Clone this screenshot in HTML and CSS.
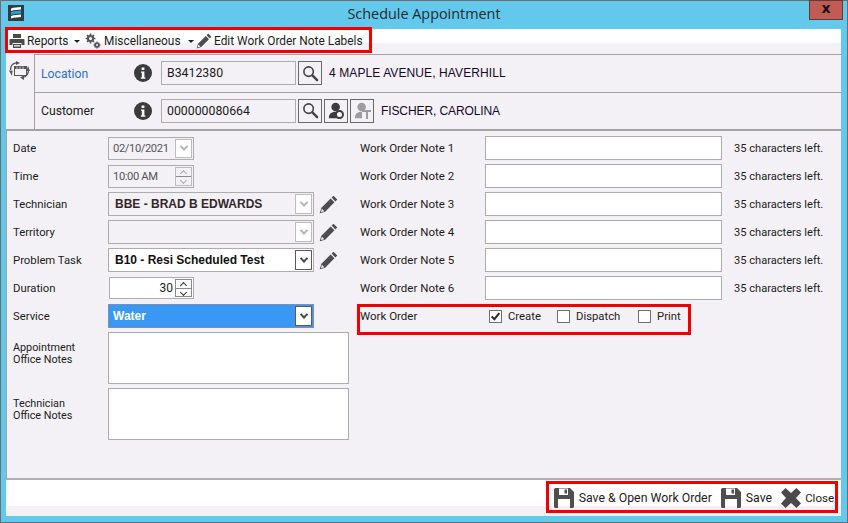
FILE: index.html
```html
<!DOCTYPE html>
<html lang="en">
<head>
<meta charset="utf-8">
<title>Schedule Appointment</title>
<link rel="stylesheet" href="styles.css">
</head>
<body>
<svg class="defs" width="0" height="0" aria-hidden="true">
  <symbol id="i-print" viewBox="0 0 16 16"><path fill="#4a4a4a" d="M4 1h8v4H4zM1.500 6h13a1 1 0 0 1 1 1v5h-3v-2h-9v2H.5V7a1 1 0 0 1 1-1zM4 11h8v4H4z"/><path fill="#fff" d="M5 12h6v.8H5zM5 13.500h6v.6H5z"/></symbol>
  <symbol id="i-gears" viewBox="0 0 16 16"><g fill="none" stroke="#555"><circle cx="5.500" cy="5.500" r="2.600" stroke-width="2"/><path stroke-width="1.600" d="M5.500.6v2M5.500 8.400v2M.6 5.500h2M8.400 5.500h2M2 2l1.400 1.400M7.600 7.600L9 9M2 9l1.400-1.400M7.600 3.400L9 2"/><circle cx="12" cy="12" r="1.800" stroke-width="1.600"/><path stroke-width="1.300" d="M12 8.600v1.400M12 14v1.400M8.600 12H10M14 12h1.400M9.600 9.600l1 1M13.400 13.400l1 1M9.600 14.400l1-1M13.400 10.600l1-1"/></g></symbol>
  <symbol id="i-pencil" viewBox="0 0 16 16"><path fill="#4d4d4d" d="M12.200.6l3.200 3.200-1.600 1.600-3.200-3.200zM9.800 3l3.200 3.200-7.800 7.800L.6 15.400 2 10.800zM2.400 11.500l-.8 2.900 2.900-.8z"/></symbol>
  <symbol id="i-search" viewBox="0 0 18 18"><circle cx="7" cy="7" r="5" fill="none" stroke="#444" stroke-width="1.700"/><path stroke="#444" stroke-width="2.600" stroke-linecap="round" d="M11 11l5 5"/></symbol>
  <symbol id="i-info" viewBox="0 0 18 18"><circle cx="9" cy="9" r="9" fill="#3c3c3c"/><path fill="#fff" d="M7.600 3.400h2.800v2.500H7.600zM7 7.400h3.400v6h1v1.300H6.800v-1.300h1v-4.700H7z"/></symbol>
  <symbol id="i-person" viewBox="0 0 20 20"><circle cx="9" cy="6" r="5"/><path d="M1 19c0-5 3-7.500 8-7.500 1.500 0 3 .2 4 .7V19z"/></symbol>
  <symbol id="i-save" viewBox="0 0 20 20"><path fill="#4f4f4f" fill-rule="evenodd" d="M1.500 0H16l4 4v14.500a1.500 1.500 0 0 1-1.500 1.500h-17A1.500 1.500 0 0 1 0 18.500v-17A1.500 1.500 0 0 1 1.500 0zM5 .5V7h9V.5zM4 11v9h12v-9z"/><path fill="#4f4f4f" d="M10.500 1.500H13v4h-2.500z"/></symbol>
  <symbol id="i-close" viewBox="0 0 20 20"><path fill="#4a4a4a" d="M4.500 0L10 5l5.500-5L20 4.500 15 10l5 5.500-4.500 4.500L10 15l-5.500 5L0 15.500 5 10 0 4.500z"/></symbol>
  <symbol id="i-logo" viewBox="0 0 16 16"><rect width="16" height="16" fill="#333b42"/><path fill="#fff" d="M3 3.500c3-1.500 7-1 10-1.500v2.500c-3 .5-7 0-10 1.500z"/><path fill="#1e9fd8" d="M3 7c3-1.500 7-1 10-1.500v3c-3 .5-7 0-10 1.500z"/><path fill="#fff" d="M3 11c3-1.500 7-1 10-1.500v2.500c-3 .5-7 0-10 1.500z"/></symbol>
  <symbol id="i-sync" viewBox="0 0 21 19"><path fill="none" stroke="#555" stroke-width="1.200" d="M1.500 9C1.500 4 4 2 8 1.800M19.500 9c0 4-2 6.500-5.500 7.500"/><path fill="#555" d="M7 0l4 2-4 2zM0 9.500h3.500L3 15zM15 14.500l-4 2 4 2.500zM17.500 10h3.500L19 5z"/><rect x="5.500" y="5.500" width="12" height="9" fill="#f3f1f5" stroke="#555"/><path fill="#555" d="M5.500 5.500h12V8h-12z"/><path stroke="#f3f1f5" stroke-width=".8" d="M8 5.500V8M11 5.500V8M14 5.500V8"/></symbol>
</svg>

<main class="window">
  <header class="titlebar">
    <svg class="app-logo"><use href="#i-logo"/></svg>
    <h1 class="title">Schedule Appointment</h1>
    <button class="close-btn" type="button"><span class="close-x">x</span></button>
  </header>

  <div class="content">
    <nav class="toolbar">
      <span class="tool t-rep"><svg class="ic16"><use href="#i-print"/></svg>Reports<i class="caret"></i></span>
      <span class="tool t-misc"><svg class="ic16 gear"><use href="#i-gears"/></svg>Miscellaneous<i class="caret"></i></span>
      <span class="tool"><svg class="ic16"><use href="#i-pencil"/></svg>Edit Work Order Note Labels</span>
    </nav>

    <section class="head">
      <div class="head-side"><svg class="sync"><use href="#i-sync"/></svg></div>
      <div class="head-rows">
        <div class="head-row">
          <a class="head-label link">Location</a>
          <svg class="info"><use href="#i-info"/></svg>
          <span class="field id-field">B3412380</span>
          <span class="sq-btn"><svg class="ic18"><use href="#i-search"/></svg></span>
          <span class="addr wide">4 MAPLE AVENUE, HAVERHILL</span>
        </div>
        <div class="head-row">
          <span class="head-label">Customer</span>
          <svg class="info"><use href="#i-info"/></svg>
          <span class="field id-field">000000080664</span>
          <span class="sq-btn"><svg class="ic18"><use href="#i-search"/></svg></span>
          <span class="sq-btn"><svg class="ic18 person-dark"><use href="#i-person"/></svg><i class="badge-round"></i></span>
          <span class="sq-btn"><svg class="ic18 person-light"><use href="#i-person"/></svg><i class="badge-t"></i></span>
          <span class="addr">FISCHER, CAROLINA</span>
        </div>
      </div>
    </section>

    <section class="form">
      <div class="col-left">
        <div class="row"><span class="lbl">Date</span>
          <span class="field dim w-date">02/10/2021<span class="drop drop-dis"><i class="chev"></i></span></span></div>
        <div class="row"><span class="lbl">Time</span>
          <span class="field dim w-date">10:00 AM<span class="spin spin-dis"><i class="up"></i><i class="down"></i></span></span></div>
        <div class="row"><span class="lbl">Technician</span>
          <span class="field w-combo disabled strong">BBE - BRAD B EDWARDS<span class="drop drop-dis"><i class="chev"></i></span></span>
          <svg class="edit"><use href="#i-pencil"/></svg></div>
        <div class="row"><span class="lbl">Territory</span>
          <span class="field w-combo disabled"><span class="drop drop-dis"><i class="chev"></i></span></span>
          <svg class="edit"><use href="#i-pencil"/></svg></div>
        <div class="row"><span class="lbl">Problem Task</span>
          <span class="field w-combo white strong dark">B10 - Resi Scheduled Test<span class="drop"><i class="chev"></i></span></span>
          <svg class="edit"><use href="#i-pencil"/></svg></div>
        <div class="row"><span class="lbl">Duration</span>
          <span class="field w-num white">30<span class="spin"><i class="up"></i><i class="down"></i></span></span></div>
        <div class="row"><span class="lbl">Service</span>
          <span class="field w-combo selected">Water<span class="drop"><i class="chev"></i></span></span></div>
        <div class="note-row"><span class="lbl two">Appointment<br>Office Notes</span><div class="area"></div></div>
        <div class="note-row"><span class="lbl two">Technician<br>Office Notes</span><div class="area"></div></div>
      </div>

      <div class="col-right">
        <div class="wo-row"><span class="wo-lbl">Work Order Note 1</span><span class="wo-input"></span><span class="left-txt">35 characters left.</span></div>
        <div class="wo-row"><span class="wo-lbl">Work Order Note 2</span><span class="wo-input"></span><span class="left-txt">35 characters left.</span></div>
        <div class="wo-row"><span class="wo-lbl">Work Order Note 3</span><span class="wo-input"></span><span class="left-txt">35 characters left.</span></div>
        <div class="wo-row"><span class="wo-lbl">Work Order Note 4</span><span class="wo-input"></span><span class="left-txt">35 characters left.</span></div>
        <div class="wo-row"><span class="wo-lbl">Work Order Note 5</span><span class="wo-input"></span><span class="left-txt">35 characters left.</span></div>
        <div class="wo-row"><span class="wo-lbl">Work Order Note 6</span><span class="wo-input"></span><span class="left-txt">35 characters left.</span></div>
        <div class="wo-row checks">
          <span class="wo-lbl">Work Order</span>
          <span class="check c1"><i class="box"><svg viewBox="0 0 13 13"><path fill="none" stroke="#2e2e2e" stroke-width="2.400" d="M2 6.500l3.200 3.200L11 2.500"/></svg></i>Create</span>
          <span class="check c2"><i class="box"></i>Dispatch</span>
          <span class="check"><i class="box"></i>Print</span>
        </div>
      </div>
    </section>

    <footer class="footer">
      <span class="fbtn"><svg class="ic20"><use href="#i-save"/></svg>Save &amp; Open Work Order</span>
      <span class="fbtn"><svg class="ic20"><use href="#i-save"/></svg>Save</span>
      <span class="fbtn"><svg class="ic20 x"><use href="#i-close"/></svg><span class="close-txt">Close</span></span>
    </footer>
  </div>

  <div class="mark mark-top"></div>
  <div class="mark mark-mid"></div>
  <div class="mark mark-bot"></div>
</main>
</body>
</html>
```

FILE: styles.css
```css
* { box-sizing: border-box; }
html, body { margin: 0; padding: 0; }
body { width: 848px; height: 523px; overflow: hidden; font-family: Roboto, "Open Sans", sans-serif; font-size: 12px; color: #1c1c1c; }
.defs { position: absolute; }
.window { position: relative; width: 848px; height: 523px; background: #62c8ec; border: 1px solid #6e6e6e; display: flex; flex-direction: column; }

.titlebar { height: 28px; display: flex; align-items: center; justify-content: center; position: relative; flex: none; }
.app-logo { position: absolute; left: 7px; top: 4px; width: 16px; height: 16px; }
.title { margin: 0 0 4px; font-family: "Open Sans", sans-serif; font-weight: 400; font-size: 14.400px; color: #1f2a30; }
.close-btn { position: absolute; right: 4px; top: -1px; width: 34px; height: 20px; background: #c25b53; border: 1px solid #5e3a38; padding: 0; display: flex; align-items: center; justify-content: center; }
.close-x { font-family: "DejaVu Sans", sans-serif; font-weight: 700; font-size: 14px; line-height: 12px; color: #111; position: relative; top: -2px; }

.content { margin: 0 6px 6px 5px; flex: 1; display: flex; flex-direction: column; background: #f3f1f5; min-height: 0; }

.toolbar { height: 25px; flex: none; display: flex; align-items: center; padding: 0 0 1px 3px; background: linear-gradient(#fff 0 14px, #f3f1f5 14px); font-size: 11.900px; }
.tool { display: inline-flex; align-items: center; gap: 2px; white-space: nowrap; }
.t-rep { width: 76px; }
.t-misc { width: 111px; gap: 3px; }
.gear { width: 15px; height: 15px; }
.ic16 { width: 16px; height: 16px; flex: none; }
.caret { width: 0; height: 0; border: 3px solid transparent; border-top: 3px solid #222; border-bottom: 0; margin-left: 4px; }

.head { display: flex; flex: none; height: 77px; border-bottom: 2px solid #a3a3a3; }
.head-side { width: 28px; flex: none; padding: 7px 0 0 3px; }
.sync { width: 21px; height: 19px; }
.head-rows { flex: 1; border-left: 1px solid #a3a3a3; border-top: 1px solid #a3a3a3; display: flex; flex-direction: column; }
.head-row { height: 38px; display: flex; align-items: center; padding: 0 0 0 6px; }
.head-row + .head-row { border-top: 1px solid #a3a3a3; }
.head-label { width: 93px; font-size: 12.200px; }
.link { color: #2a6fd0; padding-top: 2px; }
.info { width: 18px; height: 18px; margin-right: 9px; }
.field { display: flex; align-items: center; position: relative; border: 1px solid #adadad; background: #f3f1f5; white-space: nowrap; }
.id-field { width: 135px; height: 24px; padding-left: 5px; margin-right: 2px; font-size: 12.300px; }
.sq-btn { width: 24px; height: 24px; margin-right: 2px; border: 1px solid #6a6a6a; background: #f3f1f5; display: inline-flex; align-items: center; justify-content: center; position: relative; }
.ic18 { width: 17px; height: 17px; }
.person-dark { fill: #3c3c3c; }
.person-light { fill: #9d9d9d; }
.badge-round { position: absolute; right: 3px; bottom: 3px; width: 9px; height: 9px; border-radius: 50%; border: 2px solid #3c3c3c; background: #fff; }
.badge-t { position: absolute; right: 2px; bottom: 3px; width: 9px; height: 9px; border-top: 2px solid #9d9d9d; background: linear-gradient(#9d9d9d, #9d9d9d) center / 2px 100% no-repeat, #f3f1f5; }
.addr { font-family: "Liberation Sans", Arial, sans-serif; font-size: 12px; margin-left: 5px; color: #14082e; letter-spacing: -.1px; }
.addr.wide { letter-spacing: .1px; }

.form { flex: none; height: 349px; display: flex; border-left: 1px solid #a3a3a3; border-bottom: 2px solid #b0b0b0; padding-top: 3px; }
.col-left { width: 353px; flex: none; padding-left: 6px; }
.row { height: 28px; display: flex; align-items: center; }
.lbl { width: 95px; flex: none; font-size: 11.300px; }
.lbl.two { font-size: 10.800px; line-height: 12px; padding-top: 10px; }
.w-date { width: 86px; height: 23px; padding-left: 4px; font-size: 11.200px; letter-spacing: -.4px; }
.dim { color: #555; }
.w-combo { width: 206px; height: 24px; padding-left: 6px; }
.w-num { width: 85px; height: 22px; margin-left: 1px; justify-content: flex-end; padding-right: 20px; }
.white { background: #fff; }
.disabled { background: #f3f1f5; }
.strong { font-family: "Liberation Sans", Arial, sans-serif; font-weight: 700; font-size: 12px; color: #33272a; }
.strong.dark { color: #111; }
.selected { background: #3a98f5; border-color: #7d8fb3; color: #fff; font-family: "Liberation Sans", Arial, sans-serif; font-weight: 700; font-size: 12px; padding-left: 4px; }
.drop { position: absolute; right: 1px; top: 1px; bottom: 1px; width: 17px; background: #fff; border: 1px solid #5a5a5a; display: flex; align-items: center; justify-content: center; }
.drop-dis { border-color: #bcbcbc; }
.chev { width: 6px; height: 6px; border-right: 2px solid #444; border-bottom: 2px solid #444; transform: rotate(45deg) translate(-1px, -1px); }
.drop-dis .chev { border-color: #b4b4b4; }
.spin { position: absolute; right: 1px; top: 1px; bottom: 1px; width: 17px; display: flex; flex-direction: column; border: 1px solid #8a8a8a; background: #fff; }
.spin-dis { border-color: #bcbcbc; background: #f3f1f5; }
.spin i { flex: 1; position: relative; }
.spin i::after { content: ""; position: absolute; left: 5px; width: 4px; height: 4px; border-right: 1px solid #333; border-bottom: 1px solid #333; }
.spin .up { border-bottom: 1px solid #8a8a8a; }
.spin .up::after { top: 3px; transform: rotate(-135deg); }
.spin .down::after { top: 1px; transform: rotate(45deg); }
.spin-dis i::after { border-color: #aaa; }
.edit { width: 19px; height: 19px; margin-left: 5px; }
.note-row { display: flex; height: 52px; margin-bottom: 4px; }
.area { width: 241px; height: 52px; background: #fff; border: 1px solid #adadad; }
.row + .note-row { margin-top: 2px; }

.col-right { flex: 1; }
.wo-row { height: 28px; display: flex; align-items: center; font-size: 11.500px; }
.wo-lbl { width: 125px; flex: none; }
.wo-input { width: 237px; height: 24px; background: #fff; border: 1px solid #adadad; }
.left-txt { margin-left: 12px; font-size: 11.100px; }
.checks .wo-lbl { width: 129px; }
.check { display: inline-flex; align-items: center; gap: 6px; font-size: 11.300px; }
.c1 { width: 68px; }
.c2 { width: 81px; }
.box { width: 13px; height: 13px; background: #fff; border: 1px solid #6f6f6f; display: block; flex: none; }
.box svg { display: block; width: 11px; height: 11px; }

.footer { flex: 1; display: flex; justify-content: flex-end; align-items: center; gap: 9px; padding: 0 7px 1px 0; background: linear-gradient(#fff 0 26px, #f3f1f5 26px); font-size: 12.300px; }
.fbtn { display: inline-flex; align-items: center; gap: 5px; white-space: nowrap; }
.ic20 { width: 20px; height: 20px; flex: none; }
.close-txt { font-size: 11.500px; margin-left: -1px; }

.mark { position: absolute; border: 3px solid #f40000; pointer-events: none; }
.mark-top { left: 4px; top: 26px; width: 367px; height: 26px; }
.mark-mid { left: 356px; top: 303px; width: 334px; height: 31px; }
.mark-bot { left: 545px; top: 480px; width: 292px; height: 32px; }
```
